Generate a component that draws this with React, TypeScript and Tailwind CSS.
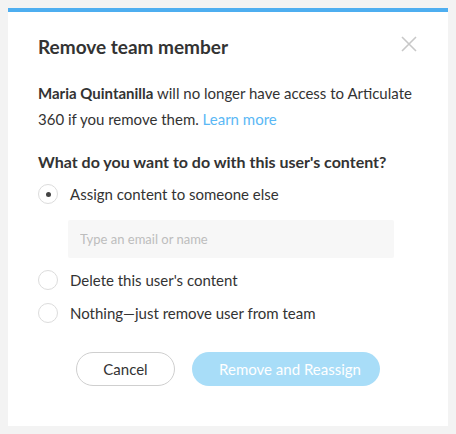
import React, { useState } from 'react';

const Radio: React.FC<{ checked: boolean; label: string; onSelect: () => void }> = ({ checked, label, onSelect }) => (
  <label onClick={onSelect} className="flex items-center gap-3 cursor-pointer h-[20px]">
    <span className="w-[20px] h-[20px] rounded-full border border-[#dcdcdc] bg-white flex items-center justify-center shrink-0">
      {checked && <span className="w-[5px] h-[5px] rounded-full bg-[#444]"></span>}
    </span>
    <span className="text-[15px] text-[#333]">{label}</span>
  </label>
);

export default function App() {
  const [choice, setChoice] = useState('assign');

  return (
    <div className="min-h-screen w-[456px] h-[434px] bg-[#f3f3f3] p-2 font-['Lato','Open_Sans',sans-serif]">
      <div className="bg-white border-t-4 border-[#4eaef0] h-[418px] relative">
        <button className="absolute top-[24px] right-[31px] text-[#c8c8c8]">
          <svg width="16" height="16" viewBox="0 0 16 16" fill="none" stroke="currentColor" strokeWidth="1.6">
            <path d="M1 1L15 15M15 1L1 15" />
          </svg>
        </button>
        <div className="pl-[30px] pr-[28px] pt-[22px]">
          <h2 className="text-[19px] font-bold text-[#333] leading-[26px]">Remove team member</h2>
          <p className="mt-[20px] text-[15px] leading-[26px] text-[#333]">
            <span className="font-bold">Maria Quintanilla</span> will no longer have access to Articulate 360 if you remove them.{' '}
            <a href="#" className="text-[#5ab8f5]">Learn more</a>
          </p>
          <h3 className="mt-[20px] text-[16px] font-bold text-[#333] leading-[20px]">What do you want to do with this user's content?</h3>
          <div className="mt-[12px] flex flex-col">
            <Radio checked={choice === 'assign'} label="Assign content to someone else" onSelect={() => setChoice('assign')} />
            <input
              placeholder="Type an email or name"
              className="mt-[16px] ml-[30px] w-[326px] h-[38px] bg-[#f7f7f7] rounded-[2px] px-3 text-[13px] text-[#333] placeholder:text-[#bdbdbd] outline-none"
            />
            <div className="mt-[12px]">
              <Radio checked={choice === 'delete'} label="Delete this user's content" onSelect={() => setChoice('delete')} />
            </div>
            <div className="mt-[13px]">
              <Radio checked={choice === 'nothing'} label="Nothing—just remove user from team" onSelect={() => setChoice('nothing')} />
            </div>
          </div>
          <div className="mt-[29px] flex gap-[17px] pl-[38px]">
            <button className="w-[99px] h-[34px] rounded-full border border-[#cfcfcf] text-[15px] text-[#333] bg-white">Cancel</button>
            <button className="w-[188px] h-[34px] rounded-full bg-[#a8ddf8] pl-2 text-[15px] text-white">Remove and Reassign</button>
          </div>
        </div>
      </div>
    </div>
  );
}
